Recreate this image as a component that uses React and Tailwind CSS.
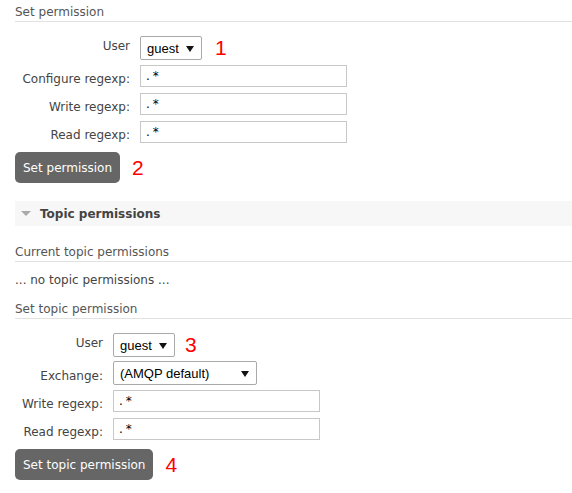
import { useState } from "react"

const font = { fontFamily: '"DejaVu Sans", Verdana, sans-serif' }

function Marker({ n, className = "" }) {
  return (
    <span className={`text-[21px] leading-[24px] text-[#ff0000] font-['Liberation_Sans',Arial,sans-serif] ${className}`}>
      {n}
    </span>
  )
}

function Select({ value, width }) {
  return (
    <div
      className={`relative flex items-center h-[24px] ${width} border border-[#a9a9a9] rounded-[2px] bg-white pl-[6px] font-['Liberation_Sans',Arial,sans-serif] text-[13px] text-black`}
    >
      <span className="leading-[16px] pt-[2px]">{value}</span>
      <svg className="absolute right-[7px] top-[9px]" width="8" height="6" viewBox="0 0 8 6">
        <path d="M0 0 H8 L4 6 Z" fill="#111" />
      </svg>
    </div>
  )
}

function TextInput({ value }) {
  const [v, setV] = useState(value)
  return (
    <input
      value={v}
      onChange={e => setV(e.target.value)}
      className="h-[22px] w-[207px] border border-[#c8c8c8] px-[5px] text-[12px] tracking-[3px] text-black outline-none"
    />
  )
}

function Header({ children }) {
  return (
    <h3 className="pt-[5px] pb-[2px] leading-[14px] text-[12px] font-normal text-[#555] border-b border-[#e2e2e2]">
      {children}
    </h3>
  )
}

function Row({ label, labelWidth, pad, children, mt }) {
  return (
    <div className={`flex items-start ${mt}`}>
      <label className={`${labelWidth} shrink-0 text-right leading-[14px] ${pad} text-[#444]`}>{label}</label>
      <div className="ml-[10px] flex items-center gap-[10px]">{children}</div>
    </div>
  )
}

function Button({ children }) {
  return (
    <button className="h-[31px] px-[8px] rounded-[5px] bg-[#666] text-white text-[12px] leading-[14px] cursor-pointer">
      {children}
    </button>
  )
}

export default function App() {
  return (
    <div className="w-[572px] h-[493px] bg-white pl-[15px] text-[12px] text-[#444] overflow-hidden" style={font}>
      {/* Set permission */}
      <Header>Set permission</Header>
      <div className="pl-[5px]">
        <Row label="User" labelWidth="w-[110px]" pad="pt-[3px]" mt="mt-[14px]">
          <Select value="guest" width="w-[62px]" />
          <Marker n="1" className="ml-[3px]" />
        </Row>
        <Row label="Configure regexp:" labelWidth="w-[110px]" pad="pt-[7px]" mt="mt-[5px]">
          <TextInput value=".*" />
        </Row>
        <Row label="Write regexp:" labelWidth="w-[110px]" pad="pt-[7px]" mt="mt-[6px]">
          <TextInput value=".*" />
        </Row>
        <Row label="Read regexp:" labelWidth="w-[110px]" pad="pt-[7px]" mt="mt-[6px]">
          <TextInput value=".*" />
        </Row>
      </div>
      <div className="mt-[9px] flex items-center gap-[12px]">
        <Button>Set permission</Button>
        <Marker n="2" />
      </div>

      {/* Topic permissions section */}
      <div className="mt-[18px] h-[25px] bg-[#f7f7f7] flex items-center pl-[6px]">
        <svg width="10" height="6" viewBox="0 0 10 6" className="mt-[1px]">
          <path d="M0 0 H10 L5 5 Z" fill="#aaa" />
        </svg>
        <span className="ml-[9px] font-bold leading-[14px] text-[#444]">Topic permissions</span>
      </div>

      <div className="mt-[14px]">
        <Header>Current topic permissions</Header>
      </div>
      <p className="mt-[11px] leading-[14px] text-[#444]">... no topic permissions ...</p>
      <div className="mt-[10px]">
        <Header>Set topic permission</Header>
      </div>
      <div className="pl-[5px]">
        <Row label="User" labelWidth="w-[83px]" pad="pt-[3px]" mt="mt-[14px]">
          <Select value="guest" width="w-[62px]" />
          <Marker n="3" />
        </Row>
        <Row label="Exchange:" labelWidth="w-[83px]" pad="pt-[8px]" mt="mt-[4px]">
          <Select value="(AMQP default)" width="w-[144px]" />
        </Row>
        <Row label="Write regexp:" labelWidth="w-[83px]" pad="pt-[7px]" mt="mt-[5px]">
          <TextInput value=".*" />
        </Row>
        <Row label="Read regexp:" labelWidth="w-[83px]" pad="pt-[7px]" mt="mt-[6px]">
          <TextInput value=".*" />
        </Row>
      </div>
      <div className="mt-[9px] flex items-center gap-[12px]">
        <Button>Set topic permission</Button>
        <Marker n="4" />
      </div>
    </div>
  )
}
